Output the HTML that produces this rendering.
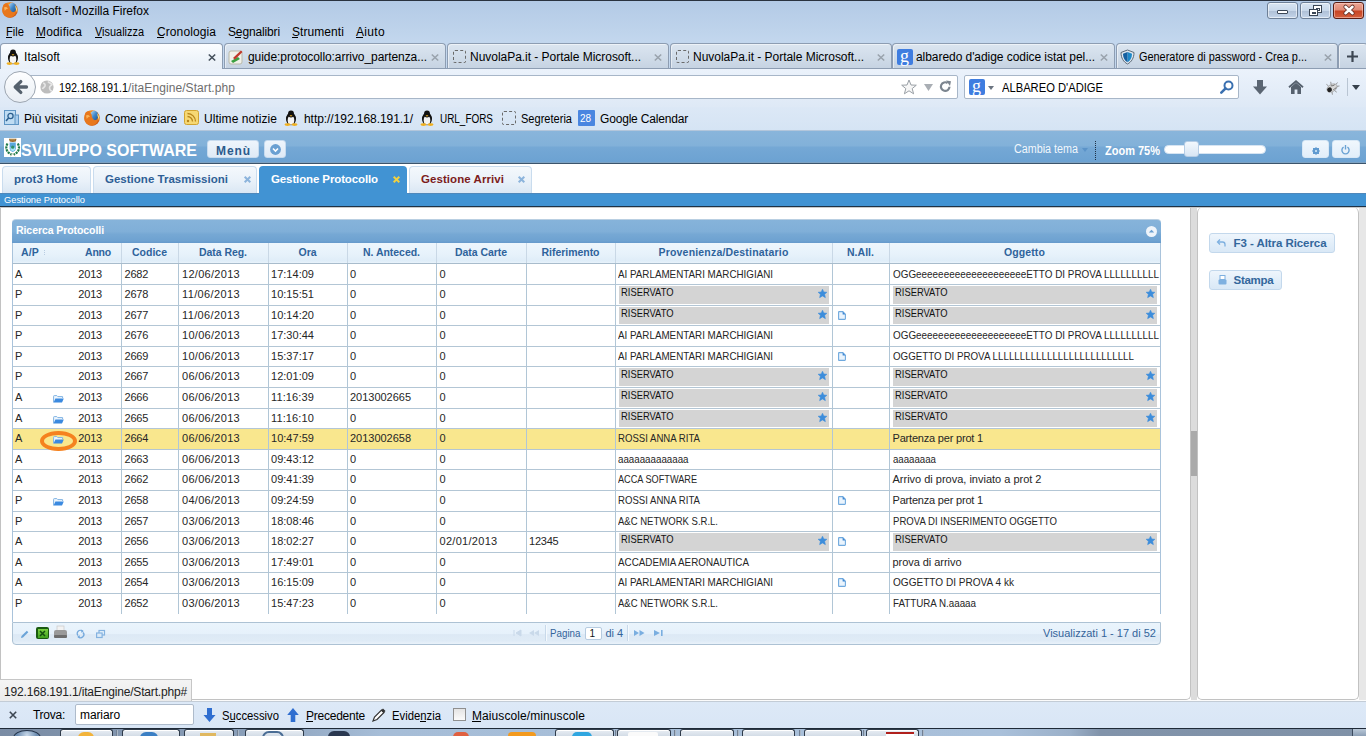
<!DOCTYPE html>
<html><head><meta charset="utf-8"><title>Italsoft</title>
<style>
*{margin:0;padding:0;box-sizing:border-box}
html,body{width:1366px;height:736px;overflow:hidden;background:#fff;font-family:"Liberation Sans",sans-serif;position:relative}
.a{position:absolute}
.t{position:absolute;white-space:pre}
svg{position:absolute;overflow:visible}
.u{text-decoration:underline}
</style></head><body>
<div class="a" style="left:0px;top:0px;width:1366px;height:131px;background:linear-gradient(#b3cae6,#bed3eb 30px,#c3d7ee 43px,#c3d7ee)"></div>
<div class="a" style="left:0px;top:0px;width:1366px;height:1px;background:#2a3340"></div>
<svg style="left:2px;top:2px" width="16" height="16" viewBox="0 0 16 16"><defs><radialGradient id="ffg" cx="45%" cy="40%" r="65%"><stop offset="0" stop-color="#ffcf5a"/><stop offset=".5" stop-color="#f5901f"/><stop offset="1" stop-color="#c24a10"/></radialGradient><linearGradient id="ffb" x1="0" y1="0" x2="1" y2="1"><stop offset="0" stop-color="#bfe0f8"/><stop offset=".5" stop-color="#3f86c8"/><stop offset="1" stop-color="#1d4f8f"/></linearGradient></defs><circle cx="8" cy="8" r="7.8" fill="url(#ffg)"/><ellipse cx="10.2" cy="5.8" rx="4" ry="5" fill="url(#ffb)"/><path d="M1.2 3.2C2.5 1.2 4.5 1 5.6 1.8L7.6 4.6C7.8 7.5 8.6 9.4 10.6 10.2L13.8 9.6C13.2 13 10.8 15.6 8 15.6 4 15.6 .4 12.5 .4 8.2 .4 6.3.7 4.6 1.2 3.2z" fill="#e8771c"/><path d="M2 5.5C3.5 4.5 5 5 6.2 6.5 5 6.8 3.5 7.5 2.8 9z" fill="#f9b45a"/><path d="M13 3.5C15 5 15.8 8 15 10.5 14.2 8 13.5 6 13 3.5z" fill="#ffe27a"/></svg>
<div class="a" style="left:1267px;top:2px;width:31px;height:17px;border:1px solid #6d7f96;border-radius:3px;background:linear-gradient(#d9e5f2 0,#c8d8ea 50%,#aebfd5 51%,#c4d5ea 100%);box-shadow:inset 0 0 0 1px rgba(255,255,255,.55)"></div>
<div class="a" style="left:1277px;top:10px;width:11px;height:4px;background:#fff;border:1px solid #3b4756;border-radius:1px"></div>
<div class="a" style="left:1300px;top:2px;width:31px;height:17px;border:1px solid #6d7f96;border-radius:3px;background:linear-gradient(#d9e5f2 0,#c8d8ea 50%,#aebfd5 51%,#c4d5ea 100%);box-shadow:inset 0 0 0 1px rgba(255,255,255,.55)"></div>
<div class="a" style="left:1313px;top:5px;width:9px;height:8px;background:#fff;border:1.5px solid #3b4756"></div>
<div class="a" style="left:1316px;top:8px;width:4px;height:3px;background:#fff;border:1px solid #3b4756"></div>
<div class="a" style="left:1309px;top:9px;width:9px;height:7px;background:#fff;border:1.5px solid #3b4756"></div>
<div class="a" style="left:1312px;top:12px;width:4px;height:2px;background:#fff;border:1px solid #3b4756"></div>
<div class="a" style="left:1333px;top:2px;width:31px;height:17px;border:1px solid #5a1d14;border-radius:3px;background:linear-gradient(#eba594 0,#e08a76 45%,#c84524 55%,#d4603e 100%);box-shadow:inset 0 0 0 1px rgba(255,220,210,.5)"></div>
<svg style="left:1343px;top:5px" width="12" height="10" viewBox="0 0 12 10"><path d="M2.5 1.8 L9.5 8.2 M9.5 1.8 L2.5 8.2" stroke="#5a2a22" stroke-width="4.2" stroke-linecap="round"/><path d="M2.5 1.8 L9.5 8.2 M9.5 1.8 L2.5 8.2" stroke="#fff" stroke-width="2.6" stroke-linecap="round"/></svg>
<div class="a" style="left:6px;top:37px;width:6px;height:1px;background:#000"></div>
<div class="a" style="left:36px;top:37px;width:9px;height:1px;background:#000"></div>
<div class="a" style="left:95px;top:37px;width:7px;height:1px;background:#000"></div>
<div class="a" style="left:157px;top:37px;width:7px;height:1px;background:#000"></div>
<div class="a" style="left:235px;top:37px;width:6px;height:1px;background:#000"></div>
<div class="a" style="left:292px;top:37px;width:6px;height:1px;background:#000"></div>
<div class="a" style="left:356px;top:37px;width:7px;height:1px;background:#000"></div>
<div class="a" style="left:0px;top:68px;width:1366px;height:1px;background:#8d9db2"></div>
<div class="a" style="left:0px;top:43px;width:223px;height:26px;border:1px solid #8d9db2;border-bottom:none;border-radius:4px 4px 0 0;background:linear-gradient(#fbfdff,#eef4fa 60%,#e9f0f8)"></div>
<div class="a" style="left:224px;top:43px;width:222px;height:25px;border:1px solid #8d9db2;border-bottom:none;border-radius:4px 4px 0 0;background:linear-gradient(#dbe5f0,#cfdbe8 60%,#c6d3e2);box-shadow:inset 1px 1px 0 rgba(255,255,255,.5)"></div>
<div class="a" style="left:447px;top:43px;width:222px;height:25px;border:1px solid #8d9db2;border-bottom:none;border-radius:4px 4px 0 0;background:linear-gradient(#dbe5f0,#cfdbe8 60%,#c6d3e2);box-shadow:inset 1px 1px 0 rgba(255,255,255,.5)"></div>
<div class="a" style="left:670px;top:43px;width:222px;height:25px;border:1px solid #8d9db2;border-bottom:none;border-radius:4px 4px 0 0;background:linear-gradient(#dbe5f0,#cfdbe8 60%,#c6d3e2);box-shadow:inset 1px 1px 0 rgba(255,255,255,.5)"></div>
<div class="a" style="left:892px;top:43px;width:223px;height:25px;border:1px solid #8d9db2;border-bottom:none;border-radius:4px 4px 0 0;background:linear-gradient(#dbe5f0,#cfdbe8 60%,#c6d3e2);box-shadow:inset 1px 1px 0 rgba(255,255,255,.5)"></div>
<div class="a" style="left:1116px;top:43px;width:222px;height:25px;border:1px solid #8d9db2;border-bottom:none;border-radius:4px 4px 0 0;background:linear-gradient(#dbe5f0,#cfdbe8 60%,#c6d3e2);box-shadow:inset 1px 1px 0 rgba(255,255,255,.5)"></div>
<div class="a" style="left:1338px;top:43px;width:30px;height:25px;border:1px solid #8d9db2;border-bottom:none;border-radius:4px 4px 0 0;background:linear-gradient(#dbe5f0,#cfdbe8 60%,#c6d3e2);box-shadow:inset 1px 1px 0 rgba(255,255,255,.5)"></div>
<svg style="left:208px;top:54px" width="8" height="7" viewBox="0 0 8 7"><path d="M.8 .5L7.2 6.5M7.2 .5L.8 6.5" stroke="#45505c" stroke-width="1.6"/></svg>
<svg style="left:431px;top:54px" width="8" height="7" viewBox="0 0 8 7"><path d="M.8 .5L7.2 6.5M7.2 .5L.8 6.5" stroke="#9aa3ad" stroke-width="1.6"/></svg>
<svg style="left:654px;top:54px" width="8" height="7" viewBox="0 0 8 7"><path d="M.8 .5L7.2 6.5M7.2 .5L.8 6.5" stroke="#9aa3ad" stroke-width="1.6"/></svg>
<svg style="left:877px;top:54px" width="8" height="7" viewBox="0 0 8 7"><path d="M.8 .5L7.2 6.5M7.2 .5L.8 6.5" stroke="#9aa3ad" stroke-width="1.6"/></svg>
<svg style="left:1100px;top:54px" width="8" height="7" viewBox="0 0 8 7"><path d="M.8 .5L7.2 6.5M7.2 .5L.8 6.5" stroke="#9aa3ad" stroke-width="1.6"/></svg>
<svg style="left:1324px;top:54px" width="8" height="7" viewBox="0 0 8 7"><path d="M.8 .5L7.2 6.5M7.2 .5L.8 6.5" stroke="#9aa3ad" stroke-width="1.6"/></svg>
<svg style="left:1347px;top:51px" width="11" height="11" viewBox="0 0 11 11"><path d="M5.5 0V11M0 5.5H11" stroke="#3c4652" stroke-width="2.2"/></svg>
<svg style="left:6px;top:49px" width="14" height="16" viewBox="0 0 14 16"><ellipse cx="7" cy="9" rx="5" ry="6.2" fill="#111"/><ellipse cx="7" cy="10.3" rx="3.3" ry="4.5" fill="#f4f4f4"/><ellipse cx="7" cy="4" rx="3" ry="3.4" fill="#111"/><path d="M5.5 5.3h3l-1.5 1.4z" fill="#f0b020"/><ellipse cx="3.5" cy="14.6" rx="3" ry="1.4" fill="#f0b020"/><ellipse cx="10.5" cy="14.6" rx="3" ry="1.4" fill="#f0b020"/></svg>
<svg style="left:228px;top:49px" width="16" height="16" viewBox="0 0 16 16"><rect x="1" y="2" width="13" height="13" rx="2" fill="#f1f1e9" stroke="#b9b9a8"/><path d="M3 12 L10 8 L12 10 L5 14z" fill="#3aa040"/><path d="M5 9 L13 1.5 L14.5 3 L7 10.5z" fill="#c0392b"/></svg>
<div class="a" style="left:453px;top:50px;width:13px;height:13px;border:1px dashed #6a6a6a;border-radius:2px"></div>
<div class="a" style="left:676px;top:50px;width:13px;height:13px;border:1px dashed #6a6a6a;border-radius:2px"></div>
<div class="a" style="left:897px;top:49px;width:16px;height:16px;background:#3f7de0;border-radius:2px"></div>
<span class="t" style="left:900px;top:47px;font-family:'Liberation Serif',serif;font-size:18px;line-height:18px;color:#fff">g</span>
<svg style="left:1120px;top:49px" width="15" height="16" viewBox="0 0 15 16"><path d="M7.5 1 L14 3.5 C14 9 11.5 13 7.5 15 C3.5 13 1 9 1 3.5z" fill="#dfe6ee" stroke="#5d6b78"/><path d="M7.5 3 L12 4.8 C12 9 10.2 11.8 7.5 13.3z" fill="#1e88c8"/><path d="M7.5 3 L3 4.8 C3 9 4.8 11.8 7.5 13.3z" fill="#1560a0"/></svg>
<div class="a" style="left:0px;top:69px;width:1366px;height:38px;background:linear-gradient(#ebf2fb,#dee9f6)"></div>
<div class="a" style="left:20px;top:75px;width:938px;height:24px;background:#fff;border:1px solid #a7b6c8;border-radius:0 2px 2px 0"></div>
<div class="a" style="left:4px;top:71px;width:32px;height:32px;border-radius:50%;border:1px solid #9da6b1;background:linear-gradient(#fdfeff,#e9eef4)"></div>
<svg style="left:11px;top:78px" width="18" height="18" viewBox="0 0 18 18"><path d="M15.5 9H5M9.8 3.6L4.2 9 9.8 14.4" fill="none" stroke="#56616d" stroke-width="3.3" stroke-linecap="round" stroke-linejoin="round"/></svg>
<svg style="left:40px;top:80px" width="14" height="14" viewBox="0 0 14 14"><circle cx="7" cy="7" r="6.6" fill="#bdbdbd"/><path d="M3 3.5C4.5 3 5.5 4.5 5 6 4.5 7.5 3 7.5 2.5 9 M8 1.5C9 3 11 3 12 4.5 11 6 9.5 6 9.5 8 9.8 10 11 11 12 11" fill="none" stroke="#e6e6e6" stroke-width="1.6"/></svg>
<svg style="left:901px;top:79px" width="16" height="16" viewBox="0 0 16 16"><path d="M8 1 L10 6 L15.3 6.2 L11.2 9.6 L12.6 14.8 L8 11.8 L3.4 14.8 L4.8 9.6 L.7 6.2 L6 6z" fill="#f7f7f7" stroke="#9aa0a6" stroke-width="1"/></svg>
<svg style="left:924px;top:84px" width="9" height="7" viewBox="0 0 9 7"><path d="M0 0H9L4.5 7z" fill="#a9aeb4"/></svg>
<svg style="left:939px;top:80px" width="13" height="13" viewBox="0 0 13 13"><path d="M10.5 6.8A4.3 4.3 0 1 1 8.6 3" fill="none" stroke="#7c858f" stroke-width="2.2"/><path d="M7 .5L12 1.2 11 6z" fill="#7c858f"/></svg>
<div class="a" style="left:964px;top:75px;width:275px;height:24px;background:#fff;border:1px solid #a7b6c8;border-radius:2px"></div>
<div class="a" style="left:969px;top:79px;width:16px;height:16px;background:#3f7de0;border-radius:2px"></div>
<span class="t" style="left:972px;top:77px;font-family:'Liberation Serif',serif;font-size:18px;line-height:18px;color:#fff">g</span>
<svg style="left:988px;top:86px" width="6" height="4" viewBox="0 0 6 4"><path d="M0 0H6L3 4z" fill="#6b7480"/></svg>
<svg style="left:1220px;top:80px" width="14" height="14" viewBox="0 0 14 14"><circle cx="8.5" cy="5.5" r="4" fill="none" stroke="#3a70b0" stroke-width="2"/><path d="M5.6 8.4L1.3 12.7" stroke="#3a70b0" stroke-width="2.6" stroke-linecap="round"/></svg>
<svg style="left:1253px;top:80px" width="14" height="15" viewBox="0 0 14 15"><path d="M4 0H10V6.5H14L7 14.5 0 6.5H4z" fill="#5a6572"/></svg>
<svg style="left:1288px;top:80px" width="16" height="15" viewBox="0 0 16 15"><path d="M1 7.2L8 1.2 15 7.2" fill="none" stroke="#56616e" stroke-width="1.8"/><path d="M3 7V14H6.6V9.6H9.4V14H13V7L8 2.8z" fill="#56616e"/></svg>
<svg style="left:1324px;top:80px" width="16" height="15" viewBox="0 0 16 15"><g transform="rotate(-30 8 8)"><ellipse cx="8" cy="8" rx="5.5" ry="3.6" fill="#d9d9d9" stroke="#9a9a9a" stroke-width=".6"/><ellipse cx="5" cy="8.3" rx="2.4" ry="2.4" fill="#222"/><path d="M8 5.5Q10 7 12 6.5M8 10.5Q10 9.5 12 10" stroke="#555" stroke-width=".7" fill="none"/><path d="M6 4.5L5 2M9 4.5L10 2M6 11.5L5 14M9 11.5L10 14M13 7L15.5 6M13 9L15.5 10" stroke="#8a8a8a" stroke-width=".8"/></g></svg>
<div class="a" style="left:1347px;top:78px;width:1px;height:18px;background:#b9c5d3"></div>
<svg style="left:1352px;top:85px" width="8" height="5" viewBox="0 0 8 5"><path d="M0 0H8L4 5z" fill="#36404b"/></svg>
<div class="a" style="left:0px;top:107px;width:1366px;height:24px;background:linear-gradient(#dce8f6,#d5e4f4)"></div>
<div class="a" style="left:0px;top:130px;width:1366px;height:1px;background:#b3c6db"></div>
<svg style="left:4px;top:110px" width="15" height="15" viewBox="0 0 15 15"><rect x=".5" y=".5" width="11" height="14" fill="#bfdcf3" stroke="#5f95c4"/><rect x="11" y="5" width="3.5" height="9.5" fill="#a8cdee" stroke="#5f95c4"/><circle cx="6.5" cy="6" r="2.6" fill="none" stroke="#2b5f90" stroke-width="1.3"/><path d="M4.6 8L2 11" stroke="#2b5f90" stroke-width="1.6"/></svg>
<svg style="left:84px;top:110px" width="16" height="16" viewBox="0 0 16 16"><circle cx="8" cy="8" r="7.8" fill="url(#ffg)"/><ellipse cx="10.2" cy="5.8" rx="4" ry="5" fill="url(#ffb)"/><path d="M1.2 3.2C2.5 1.2 4.5 1 5.6 1.8L7.6 4.6C7.8 7.5 8.6 9.4 10.6 10.2L13.8 9.6C13.2 13 10.8 15.6 8 15.6 4 15.6 .4 12.5 .4 8.2 .4 6.3.7 4.6 1.2 3.2z" fill="#e8771c"/><path d="M2 5.5C3.5 4.5 5 5 6.2 6.5 5 6.8 3.5 7.5 2.8 9z" fill="#f9b45a"/><path d="M13 3.5C15 5 15.8 8 15 10.5 14.2 8 13.5 6 13 3.5z" fill="#ffe27a"/></svg>
<svg style="left:184px;top:110px" width="15" height="15" viewBox="0 0 15 15"><rect x=".5" y=".5" width="14" height="14" rx="2" fill="#f6d873" stroke="#d1a431"/><path d="M3.5 6.5A5 5 0 0 1 8.5 11.5M3.5 3.5A8 8 0 0 1 11.5 11.5" fill="none" stroke="#b7851b" stroke-width="1.3"/><circle cx="4" cy="11" r="1.2" fill="#b7851b"/></svg>
<svg style="left:284px;top:110px" width="14" height="16" viewBox="0 0 14 16"><ellipse cx="7" cy="9" rx="5" ry="6.2" fill="#111"/><ellipse cx="7" cy="10.3" rx="3.3" ry="4.5" fill="#f4f4f4"/><ellipse cx="7" cy="4" rx="3" ry="3.4" fill="#111"/><path d="M5.5 5.3h3l-1.5 1.4z" fill="#f0b020"/><ellipse cx="3.5" cy="14.6" rx="3" ry="1.4" fill="#f0b020"/><ellipse cx="10.5" cy="14.6" rx="3" ry="1.4" fill="#f0b020"/></svg>
<svg style="left:420px;top:110px" width="14" height="16" viewBox="0 0 14 16"><ellipse cx="7" cy="9" rx="5" ry="6.2" fill="#111"/><ellipse cx="7" cy="10.3" rx="3.3" ry="4.5" fill="#f4f4f4"/><ellipse cx="7" cy="4" rx="3" ry="3.4" fill="#111"/><path d="M5.5 5.3h3l-1.5 1.4z" fill="#f0b020"/><ellipse cx="3.5" cy="14.6" rx="3" ry="1.4" fill="#f0b020"/><ellipse cx="10.5" cy="14.6" rx="3" ry="1.4" fill="#f0b020"/></svg>
<div class="a" style="left:502px;top:111px;width:14px;height:14px;border:1px dashed #6a6a6a;border-radius:2px"></div>
<div class="a" style="left:578px;top:110px;width:17px;height:16px;background:#4a86e0;border-radius:1px"></div>
<span class="t" style="left:580px;top:114px;font-size:10px;line-height:10px;color:#fff">28</span>
<div class="a" style="left:0px;top:131px;width:1366px;height:32px;background:linear-gradient(#89b5db 0,#82b1d9 15px,#75a8d5 16px,#6ca2d2 31px)"></div>
<div class="a" style="left:0px;top:162px;width:1366px;height:1px;background:#7da2c3"></div>
<div class="a" style="left:0px;top:163px;width:1366px;height:1px;background:#3b546c"></div>
<div class="a" style="left:4px;top:138px;width:17px;height:19px;background:#fff"></div>
<svg style="left:4px;top:138px" width="17" height="19" viewBox="0 0 17 19"><path d="M5 .8H12.5L11.8 3.6Q8.7 4.3 5.7 3.6z" fill="#94682a"/><path d="M6.2 1.8H11.3" stroke="#d9b070" stroke-width=".7"/><path d="M5.6 4.6H11.8V10.8Q11.8 13 8.7 14 5.6 13 5.6 10.8z" fill="#5aa8dc"/><path d="M6.5 9H11V11.5Q10 13 8.7 13.3 7.4 13 6.5 11.5z" fill="#a6e4f4"/><circle cx="8.7" cy="9.2" r="1.6" fill="#2f8f6a"/><path d="M3.5 5.5Q1.4 9 3 12.5 4.6 15.5 7.6 16.4" fill="none" stroke="#1f7a4a" stroke-width="2.2" stroke-dasharray="2.2 .8"/><path d="M13.8 5.5Q15.9 9 14.3 12.5 12.7 15.5 9.7 16.4" fill="none" stroke="#1f7a4a" stroke-width="2.2" stroke-dasharray="2.2 .8"/><path d="M6.2 18L8.7 15.8 11.2 18" fill="none" stroke="#9ab090" stroke-width=".9"/></svg>
<div class="a" style="left:207px;top:140px;width:52px;height:18px;border-radius:3px;background:linear-gradient(#eef5fc,#dfeaf6);border:1px solid #c7dbef"></div>
<div class="a" style="left:264px;top:140px;width:22px;height:18px;border-radius:3px;background:linear-gradient(#eef5fc,#dfeaf6);border:1px solid #c7dbef"></div>
<svg style="left:270px;top:143.5px" width="11" height="11" viewBox="0 0 11 11"><circle cx="5.5" cy="5.5" r="5.4" fill="#6aa0d2"/><path d="M3 4.5L5.5 7 8 4.5" fill="none" stroke="#fff" stroke-width="1.6"/></svg>
<svg style="left:1082px;top:148px" width="6" height="4" viewBox="0 0 6 4"><path d="M0 0H6L3 4z" fill="#5b93c8"/></svg>
<div class="a" style="left:1095px;top:141px;width:1px;height:19px;background:repeating-linear-gradient(#1f3044 0 1px,transparent 1px 2px)"></div>
<div class="a" style="left:1164px;top:145px;width:102px;height:9px;border-radius:4.5px;background:#fff;border:1px solid #d6e4f2"></div>
<div class="a" style="left:1184px;top:141px;width:15px;height:16px;border-radius:3px;background:linear-gradient(#f3f8fd,#d8e6f4);border:1px solid #b6cde5"></div>
<div class="a" style="left:1302px;top:140px;width:27px;height:18px;border-radius:3px;background:linear-gradient(#f0f7fd,#e2eef9);border:1px solid #d8e8f6"></div>
<svg style="left:1312px;top:147px" width="8" height="8" viewBox="0 0 8 8"><path d="M1 1H3L4 0 5 1H7V3L8 4 7 5V7H5L4 8 3 7H1V5L0 4 1 3z" fill="#5f9ad0"/><circle cx="4" cy="4" r="1" fill="#d8ecfa"/></svg>
<div class="a" style="left:1332px;top:140px;width:28px;height:18px;border-radius:3px;background:linear-gradient(#f0f7fd,#e2eef9);border:1px solid #d8e8f6"></div>
<svg style="left:1341px;top:145px" width="9" height="9" viewBox="0 0 9 9"><path d="M2.6 2.2A3.6 3.6 0 1 0 6.4 2.2" fill="none" stroke="#6aa2d4" stroke-width="1.4"/><path d="M4.5 0V4.5" stroke="#6aa2d4" stroke-width="1.4"/></svg>
<div class="a" style="left:0px;top:164px;width:1366px;height:29px;background:#fff"></div>
<div class="a" style="left:2px;top:166px;width:89px;height:27px;border:1px solid #c9dcee;border-bottom:none;border-radius:4px 4px 0 0;background:linear-gradient(#f4f8fc 0,#e9f1f9 55%,#dae7f4 100%)"></div>
<div class="a" style="left:93px;top:166px;width:164px;height:27px;border:1px solid #c9dcee;border-bottom:none;border-radius:4px 4px 0 0;background:linear-gradient(#f4f8fc 0,#e9f1f9 55%,#dae7f4 100%)"></div>
<svg style="left:244px;top:176px" width="7" height="7" viewBox="0 0 7 7"><path d="M.7.7L6.3 6.3M6.3.7L.7 6.3" stroke="#8cb4dc" stroke-width="2"/></svg>
<div class="a" style="left:409px;top:166px;width:123px;height:27px;border:1px solid #c9dcee;border-bottom:none;border-radius:4px 4px 0 0;background:linear-gradient(#f4f8fc 0,#e9f1f9 55%,#dae7f4 100%)"></div>
<svg style="left:518px;top:176px" width="7" height="7" viewBox="0 0 7 7"><path d="M.7.7L6.3 6.3M6.3.7L.7 6.3" stroke="#8cb4dc" stroke-width="2"/></svg>
<div class="a" style="left:259px;top:166px;width:148px;height:28px;border-radius:4px 4px 0 0;background:#4193d3"></div>
<svg style="left:393px;top:176px" width="7" height="7" viewBox="0 0 7 7"><path d="M.7.7L6.3 6.3M6.3.7L.7 6.3" stroke="#f0d040" stroke-width="2"/></svg>
<div class="a" style="left:0px;top:193px;width:1366px;height:13px;background:#4193d3"></div>
<div class="a" style="left:0px;top:193px;width:259px;height:1px;background:#4f88bb"></div>
<div class="a" style="left:407px;top:193px;width:959px;height:1px;background:#4f88bb"></div>
<div class="a" style="left:0px;top:206px;width:1366px;height:1px;background:#1e3246"></div>
<div class="a" style="left:0px;top:207px;width:1366px;height:493px;background:#fff"></div>
<div class="a" style="left:0px;top:207px;width:1191px;height:493px;border:1px solid #c2c2c2;border-top:none;border-radius:0 0 5px 5px"></div>
<div class="a" style="left:1191px;top:207px;width:6px;height:493px;background:#dcdcdc"></div>
<div class="a" style="left:1191px;top:431px;width:6px;height:45px;background:#aaaaaa"></div>
<div class="a" style="left:1197px;top:207px;width:162px;height:493px;border:1px solid #c2c2c2;border-top:none;border-radius:6px 6px 5px 5px;background:#fff"></div>
<div class="a" style="left:1359px;top:207px;width:7px;height:493px;background:#e7e7e7"></div>
<div class="a" style="left:0px;top:207px;width:1366px;height:1px;background:#c9c9c9"></div>
<div class="a" style="left:12px;top:219px;width:1149px;height:24px;border-radius:4px 4px 0 0;border-top:1px solid #b9cfe2;background:linear-gradient(#86b3da 0,#80afd8 50%,#76a8d4 62%,#6ea2d1 90%,#6699cb 100%)"></div>
<svg style="left:1146px;top:226px" width="11" height="11" viewBox="0 0 11 11"><circle cx="5.5" cy="5.5" r="5.5" fill="#eef4fa"/><path d="M2.8 6.6L5.5 3.8 8.2 6.6z" fill="#6a9fd0"/></svg>
<div class="a" style="left:12px;top:243px;width:1149px;height:21px;background:linear-gradient(#edf6fd 0,#e7f2fb 55%,#dfedf8 90%,#e9f3fb 100%);border-left:1px solid #a9c3db;border-right:1px solid #a9c3db;border-bottom:1px solid #a8bccc"></div>
<div class="a" style="left:12px;top:264px;width:1149px;height:358px;background:#fff;border-left:1px solid #a9c3db;border-right:1px solid #a9c3db"></div>
<div class="a" style="left:44px;top:250px;width:1px;height:6px;background:repeating-linear-gradient(#b9cde2 0 1px,transparent 1px 2px)"></div>
<div class="a" style="left:121px;top:243px;width:1px;height:20px;background:#c9d8e6"></div>
<div class="a" style="left:178px;top:243px;width:1px;height:20px;background:#c9d8e6"></div>
<div class="a" style="left:268px;top:243px;width:1px;height:20px;background:#c9d8e6"></div>
<div class="a" style="left:347px;top:243px;width:1px;height:20px;background:#c9d8e6"></div>
<div class="a" style="left:436px;top:243px;width:1px;height:20px;background:#c9d8e6"></div>
<div class="a" style="left:526px;top:243px;width:1px;height:20px;background:#c9d8e6"></div>
<div class="a" style="left:615px;top:243px;width:1px;height:20px;background:#c9d8e6"></div>
<div class="a" style="left:832px;top:243px;width:1px;height:20px;background:#c9d8e6"></div>
<div class="a" style="left:889px;top:243px;width:1px;height:20px;background:#c9d8e6"></div>
<div class="a" style="left:13px;top:429px;width:1147px;height:20px;background:#f9e78e"></div>
<div class="a" style="left:13px;top:284px;width:1147px;height:1px;background:#b3c6d5"></div>
<div class="a" style="left:13px;top:305px;width:1147px;height:1px;background:#b3c6d5"></div>
<div class="a" style="left:13px;top:325px;width:1147px;height:1px;background:#b3c6d5"></div>
<div class="a" style="left:13px;top:346px;width:1147px;height:1px;background:#b3c6d5"></div>
<div class="a" style="left:13px;top:366px;width:1147px;height:1px;background:#b3c6d5"></div>
<div class="a" style="left:13px;top:387px;width:1147px;height:1px;background:#b3c6d5"></div>
<div class="a" style="left:13px;top:408px;width:1147px;height:1px;background:#b3c6d5"></div>
<div class="a" style="left:13px;top:428px;width:1147px;height:1px;background:#b3c6d5"></div>
<div class="a" style="left:13px;top:449px;width:1147px;height:1px;background:#b3c6d5"></div>
<div class="a" style="left:13px;top:469px;width:1147px;height:1px;background:#b3c6d5"></div>
<div class="a" style="left:13px;top:490px;width:1147px;height:1px;background:#b3c6d5"></div>
<div class="a" style="left:13px;top:511px;width:1147px;height:1px;background:#b3c6d5"></div>
<div class="a" style="left:13px;top:531px;width:1147px;height:1px;background:#b3c6d5"></div>
<div class="a" style="left:13px;top:552px;width:1147px;height:1px;background:#b3c6d5"></div>
<div class="a" style="left:13px;top:572px;width:1147px;height:1px;background:#b3c6d5"></div>
<div class="a" style="left:13px;top:593px;width:1147px;height:1px;background:#b3c6d5"></div>
<div class="a" style="left:121px;top:264px;width:1px;height:350px;background:#b1c6d6"></div>
<div class="a" style="left:178px;top:264px;width:1px;height:350px;background:#b1c6d6"></div>
<div class="a" style="left:268px;top:264px;width:1px;height:350px;background:#b1c6d6"></div>
<div class="a" style="left:347px;top:264px;width:1px;height:350px;background:#b1c6d6"></div>
<div class="a" style="left:436px;top:264px;width:1px;height:350px;background:#b1c6d6"></div>
<div class="a" style="left:526px;top:264px;width:1px;height:350px;background:#b1c6d6"></div>
<div class="a" style="left:615px;top:264px;width:1px;height:350px;background:#b1c6d6"></div>
<div class="a" style="left:832px;top:264px;width:1px;height:350px;background:#b1c6d6"></div>
<div class="a" style="left:889px;top:264px;width:1px;height:350px;background:#b1c6d6"></div>
<div class="a" style="left:619px;top:286px;width:210px;height:18px;background:#d4d4d4"></div>
<svg style="left:818px;top:289px" width="9" height="9" viewBox="0 0 10 10"><path d="M5 .2L6.5 3.3 9.9 3.6 7.4 5.8 8.2 9.6 5 7.7 1.8 9.6 2.6 5.8.1 3.6 3.5 3.3z" fill="#3d8ddb" stroke="#3d8ddb" stroke-width=".6" stroke-linejoin="round"/></svg>
<div class="a" style="left:893px;top:286px;width:264px;height:18px;background:#d4d4d4"></div>
<svg style="left:1146px;top:289px" width="9" height="9" viewBox="0 0 10 10"><path d="M5 .2L6.5 3.3 9.9 3.6 7.4 5.8 8.2 9.6 5 7.7 1.8 9.6 2.6 5.8.1 3.6 3.5 3.3z" fill="#3d8ddb" stroke="#3d8ddb" stroke-width=".6" stroke-linejoin="round"/></svg>
<div class="a" style="left:619px;top:307px;width:210px;height:17px;background:#d4d4d4"></div>
<svg style="left:818px;top:310px" width="9" height="9" viewBox="0 0 10 10"><path d="M5 .2L6.5 3.3 9.9 3.6 7.4 5.8 8.2 9.6 5 7.7 1.8 9.6 2.6 5.8.1 3.6 3.5 3.3z" fill="#3d8ddb" stroke="#3d8ddb" stroke-width=".6" stroke-linejoin="round"/></svg>
<svg style="left:838px;top:311px" width="8" height="9" viewBox="0 0 8 9"><path d="M1.2.6H4.8L7.4 3.2V7.8Q7.4 8.4 6.8 8.4H1.2Q.6 8.4.6 7.8V1.2Q.6.6 1.2.6z" fill="#eaf4fd" stroke="#6fa9de" stroke-width="1.1"/><path d="M4.6.6V3.4H7.4z" fill="#3f88d4"/></svg>
<div class="a" style="left:893px;top:307px;width:264px;height:17px;background:#d4d4d4"></div>
<svg style="left:1146px;top:310px" width="9" height="9" viewBox="0 0 10 10"><path d="M5 .2L6.5 3.3 9.9 3.6 7.4 5.8 8.2 9.6 5 7.7 1.8 9.6 2.6 5.8.1 3.6 3.5 3.3z" fill="#3d8ddb" stroke="#3d8ddb" stroke-width=".6" stroke-linejoin="round"/></svg>
<svg style="left:838px;top:352px" width="8" height="9" viewBox="0 0 8 9"><path d="M1.2.6H4.8L7.4 3.2V7.8Q7.4 8.4 6.8 8.4H1.2Q.6 8.4.6 7.8V1.2Q.6.6 1.2.6z" fill="#eaf4fd" stroke="#6fa9de" stroke-width="1.1"/><path d="M4.6.6V3.4H7.4z" fill="#3f88d4"/></svg>
<div class="a" style="left:619px;top:368px;width:210px;height:18px;background:#d4d4d4"></div>
<svg style="left:818px;top:371px" width="9" height="9" viewBox="0 0 10 10"><path d="M5 .2L6.5 3.3 9.9 3.6 7.4 5.8 8.2 9.6 5 7.7 1.8 9.6 2.6 5.8.1 3.6 3.5 3.3z" fill="#3d8ddb" stroke="#3d8ddb" stroke-width=".6" stroke-linejoin="round"/></svg>
<div class="a" style="left:893px;top:368px;width:264px;height:18px;background:#d4d4d4"></div>
<svg style="left:1146px;top:371px" width="9" height="9" viewBox="0 0 10 10"><path d="M5 .2L6.5 3.3 9.9 3.6 7.4 5.8 8.2 9.6 5 7.7 1.8 9.6 2.6 5.8.1 3.6 3.5 3.3z" fill="#3d8ddb" stroke="#3d8ddb" stroke-width=".6" stroke-linejoin="round"/></svg>
<svg style="left:53px;top:395px" width="11" height="8" viewBox="0 0 11 8"><path d="M.6 7.4V1.3Q.6.6 1.3.6H3.8L4.8 1.6H9.6V3" fill="#eef6fd" stroke="#7fb3e3" stroke-width="1"/><path d="M2.4 3.4H10.8L9 7.6H.6z" fill="#3b8ae0"/></svg>
<div class="a" style="left:619px;top:389px;width:210px;height:18px;background:#d4d4d4"></div>
<svg style="left:818px;top:392px" width="9" height="9" viewBox="0 0 10 10"><path d="M5 .2L6.5 3.3 9.9 3.6 7.4 5.8 8.2 9.6 5 7.7 1.8 9.6 2.6 5.8.1 3.6 3.5 3.3z" fill="#3d8ddb" stroke="#3d8ddb" stroke-width=".6" stroke-linejoin="round"/></svg>
<div class="a" style="left:893px;top:389px;width:264px;height:18px;background:#d4d4d4"></div>
<svg style="left:1146px;top:392px" width="9" height="9" viewBox="0 0 10 10"><path d="M5 .2L6.5 3.3 9.9 3.6 7.4 5.8 8.2 9.6 5 7.7 1.8 9.6 2.6 5.8.1 3.6 3.5 3.3z" fill="#3d8ddb" stroke="#3d8ddb" stroke-width=".6" stroke-linejoin="round"/></svg>
<svg style="left:53px;top:416px" width="11" height="8" viewBox="0 0 11 8"><path d="M.6 7.4V1.3Q.6.6 1.3.6H3.8L4.8 1.6H9.6V3" fill="#eef6fd" stroke="#7fb3e3" stroke-width="1"/><path d="M2.4 3.4H10.8L9 7.6H.6z" fill="#3b8ae0"/></svg>
<div class="a" style="left:619px;top:410px;width:210px;height:17px;background:#d4d4d4"></div>
<svg style="left:818px;top:413px" width="9" height="9" viewBox="0 0 10 10"><path d="M5 .2L6.5 3.3 9.9 3.6 7.4 5.8 8.2 9.6 5 7.7 1.8 9.6 2.6 5.8.1 3.6 3.5 3.3z" fill="#3d8ddb" stroke="#3d8ddb" stroke-width=".6" stroke-linejoin="round"/></svg>
<div class="a" style="left:893px;top:410px;width:264px;height:17px;background:#d4d4d4"></div>
<svg style="left:1146px;top:413px" width="9" height="9" viewBox="0 0 10 10"><path d="M5 .2L6.5 3.3 9.9 3.6 7.4 5.8 8.2 9.6 5 7.7 1.8 9.6 2.6 5.8.1 3.6 3.5 3.3z" fill="#3d8ddb" stroke="#3d8ddb" stroke-width=".6" stroke-linejoin="round"/></svg>
<svg style="left:53px;top:436px" width="11" height="8" viewBox="0 0 11 8"><path d="M.6 7.4V1.3Q.6.6 1.3.6H3.8L4.8 1.6H9.6V3" fill="#eef6fd" stroke="#7fb3e3" stroke-width="1"/><path d="M2.4 3.4H10.8L9 7.6H.6z" fill="#3b8ae0"/></svg>
<svg style="left:53px;top:498px" width="11" height="8" viewBox="0 0 11 8"><path d="M.6 7.4V1.3Q.6.6 1.3.6H3.8L4.8 1.6H9.6V3" fill="#eef6fd" stroke="#7fb3e3" stroke-width="1"/><path d="M2.4 3.4H10.8L9 7.6H.6z" fill="#3b8ae0"/></svg>
<svg style="left:838px;top:496px" width="8" height="9" viewBox="0 0 8 9"><path d="M1.2.6H4.8L7.4 3.2V7.8Q7.4 8.4 6.8 8.4H1.2Q.6 8.4.6 7.8V1.2Q.6.6 1.2.6z" fill="#eaf4fd" stroke="#6fa9de" stroke-width="1.1"/><path d="M4.6.6V3.4H7.4z" fill="#3f88d4"/></svg>
<div class="a" style="left:619px;top:533px;width:210px;height:18px;background:#d4d4d4"></div>
<svg style="left:818px;top:536px" width="9" height="9" viewBox="0 0 10 10"><path d="M5 .2L6.5 3.3 9.9 3.6 7.4 5.8 8.2 9.6 5 7.7 1.8 9.6 2.6 5.8.1 3.6 3.5 3.3z" fill="#3d8ddb" stroke="#3d8ddb" stroke-width=".6" stroke-linejoin="round"/></svg>
<svg style="left:838px;top:537px" width="8" height="9" viewBox="0 0 8 9"><path d="M1.2.6H4.8L7.4 3.2V7.8Q7.4 8.4 6.8 8.4H1.2Q.6 8.4.6 7.8V1.2Q.6.6 1.2.6z" fill="#eaf4fd" stroke="#6fa9de" stroke-width="1.1"/><path d="M4.6.6V3.4H7.4z" fill="#3f88d4"/></svg>
<div class="a" style="left:893px;top:533px;width:264px;height:18px;background:#d4d4d4"></div>
<svg style="left:1146px;top:536px" width="9" height="9" viewBox="0 0 10 10"><path d="M5 .2L6.5 3.3 9.9 3.6 7.4 5.8 8.2 9.6 5 7.7 1.8 9.6 2.6 5.8.1 3.6 3.5 3.3z" fill="#3d8ddb" stroke="#3d8ddb" stroke-width=".6" stroke-linejoin="round"/></svg>
<svg style="left:838px;top:578px" width="8" height="9" viewBox="0 0 8 9"><path d="M1.2.6H4.8L7.4 3.2V7.8Q7.4 8.4 6.8 8.4H1.2Q.6 8.4.6 7.8V1.2Q.6.6 1.2.6z" fill="#eaf4fd" stroke="#6fa9de" stroke-width="1.1"/><path d="M4.6.6V3.4H7.4z" fill="#3f88d4"/></svg>
<div class="a" style="left:40px;top:431px;width:36.5px;height:20px;border:4.6px solid #f5821f;border-radius:50%"></div>
<div class="a" style="left:12px;top:614px;width:1149px;height:8px;background:#fff;border-left:1px solid #a9c3db"></div>
<div class="a" style="left:12px;top:622px;width:1149px;height:23px;border:1px solid #adc2d4;border-radius:0 0 4px 4px;background:linear-gradient(#eaf4fc 0,#e6f1fb 50%,#dde9f5 55%,#dfebf6 85%,#eaf2fa 100%)"></div>
<svg style="left:20px;top:630px" width="9" height="9" viewBox="0 0 9 9"><path d="M1 8L1.5 6 6.8 .7 8.3 2.2 3 7.5z" fill="#6aa3d8"/></svg>
<div class="a" style="left:36px;top:627px;width:13px;height:12px;background:#1a5a10;border-radius:2px"></div>
<div class="a" style="left:37.5px;top:628.5px;width:10px;height:9px;background:linear-gradient(#7ad040,#3fa020)"></div>
<svg style="left:39px;top:629.5px" width="7" height="7" viewBox="0 0 7 7"><path d="M1 1L6 6M6 1L1 6" stroke="#145010" stroke-width="1.5"/></svg>
<svg style="left:53px;top:626px" width="15" height="13" viewBox="0 0 15 13"><rect x="4" y="0" width="7" height="5" fill="#f2f2f2" stroke="#c8c8c8" stroke-width=".7"/><path d="M1 6Q1 4 3 4H12Q14 4 14 6V10H1z" fill="#9a9a9a"/><rect x="1" y="9" width="13" height="3" rx="1" fill="#6d6d6d"/></svg>
<svg style="left:76px;top:629px" width="9" height="10" viewBox="0 0 9 10"><path d="M2 6.5A3 3 0 0 1 6.5 2.3M7 3.5A3 3 0 0 1 2.5 7.7" fill="none" stroke="#75a9dc" stroke-width="1.3"/><path d="M5.2 .5L7.8 2 5.5 4z M3.8 9.5L1.2 8 3.5 6z" fill="#75a9dc"/></svg>
<svg style="left:96px;top:630px" width="9" height="8" viewBox="0 0 9 8"><rect x="3" y=".5" width="5.5" height="4.5" fill="none" stroke="#84b2e0" stroke-width="1.2"/><rect x=".6" y="3" width="5.5" height="4.5" fill="#dceaf7" stroke="#84b2e0" stroke-width="1.2"/></svg>
<svg style="left:513px;top:630px" width="9" height="6" viewBox="0 0 9 6"><path d="M1 0V6M8 0V6L3 3z" fill="#c9d9ea" stroke="#c9d9ea" stroke-width="1"/></svg>
<svg style="left:529px;top:630px" width="10" height="6" viewBox="0 0 10 6"><path d="M5 0V6L0 3zM10 0V6L5 3z" fill="#c9d9ea"/></svg>
<div class="a" style="left:545px;top:625px;width:1px;height:16px;background:#c8d9ea;box-shadow:1px 0 0 #f4f9fd"></div>
<div class="a" style="left:585px;top:627px;width:17px;height:13px;background:#fff;border:1px solid #b6cbe0;border-radius:2px"></div>
<div class="a" style="left:627px;top:625px;width:1px;height:16px;background:#c8d9ea;box-shadow:1px 0 0 #f4f9fd"></div>
<svg style="left:634px;top:630px" width="11" height="6" viewBox="0 0 11 6"><path d="M0 0V6L5 3zM5.5 0V6L10.5 3z" fill="#7aaee0"/></svg>
<svg style="left:654px;top:630px" width="9" height="6" viewBox="0 0 9 6"><path d="M0 0V6L6 3z" fill="#7aaee0"/><rect x="7" y="0" width="1.6" height="6" fill="#7aaee0"/></svg>
<div class="a" style="left:1209px;top:233px;width:126px;height:20px;border:1px solid #c3d8ec;border-radius:3px;background:linear-gradient(#eef5fc,#e2eef9 55%,#d9e8f6)"></div>
<svg style="left:1217px;top:239px" width="9" height="8" viewBox="0 0 9 8"><path d="M3 .5L.5 3 3 5.5" fill="none" stroke="#7eb0e0" stroke-width="1.3"/><path d="M1 3H5.5A2.5 2.5 0 0 1 8 5.5V7.5" fill="none" stroke="#7eb0e0" stroke-width="1.3"/></svg>
<div class="a" style="left:1209px;top:270px;width:73px;height:20px;border:1px solid #c3d8ec;border-radius:3px;background:linear-gradient(#eef5fc,#e2eef9 55%,#d9e8f6)"></div>
<svg style="left:1218px;top:275px" width="9" height="10" viewBox="0 0 9 10"><rect x="2" y=".5" width="5" height="4" fill="#fff" stroke="#7eb0e0" stroke-width="1"/><rect x=".5" y="4.5" width="8" height="5" rx="1" fill="#7eb0e0"/></svg>
<div class="a" style="left:0px;top:679px;width:192px;height:22px;background:linear-gradient(#f4f4f4,#ebebeb);border:1px solid #c6c6c6;border-left:none;border-bottom:none"></div>
<div class="a" style="left:192px;top:700px;width:1174px;height:1px;background:#fbfbfb"></div>
<div class="a" style="left:0px;top:701px;width:1366px;height:27px;background:linear-gradient(#dde9f7,#d9e6f6)"></div>
<div class="a" style="left:0px;top:701px;width:1366px;height:1px;background:#c3ccd6"></div>
<svg style="left:9px;top:711px" width="8" height="8" viewBox="0 0 8 8"><path d="M.8.8L7.2 7.2M7.2.8L.8 7.2" stroke="#3c4652" stroke-width="1.6"/></svg>
<div class="a" style="left:75px;top:704px;width:119px;height:21px;background:#fff;border:1px solid #aebbcb;border-radius:2px"></div>
<svg style="left:203px;top:708px" width="13" height="14" viewBox="0 0 13 14"><path d="M4 0H9V7H12.5L6.5 14 .5 7H4z" fill="#2f6ed0"/></svg>
<div class="a" style="left:229px;top:721px;width:6px;height:1px;background:#000"></div>
<svg style="left:287px;top:708px" width="12" height="14" viewBox="0 0 12 14"><path d="M3.7 14H8.3V7H11.8L6 0 .2 7H3.7z" fill="#2f6ed0"/></svg>
<div class="a" style="left:306px;top:721px;width:7px;height:1px;background:#000"></div>
<svg style="left:372px;top:708px" width="14" height="14" viewBox="0 0 14 14"><path d="M1 13L2.5 9 9.5 2 12 4.5 5 11.5z" fill="#fff" stroke="#333" stroke-width="1.2"/><path d="M9 2.5L11 .5 13.5 3 11.5 5" fill="#333"/></svg>
<div class="a" style="left:420px;top:721px;width:6px;height:1px;background:#000"></div>
<div class="a" style="left:453px;top:708px;width:13px;height:13px;background:linear-gradient(#e4e4e4,#fbfbfb);border:1px solid #8f8f8f"></div>
<div class="a" style="left:472px;top:721px;width:9px;height:1px;background:#000"></div>
<div class="a" style="left:0px;top:728px;width:1366px;height:8px;background:linear-gradient(90deg,#7a8ca4 0,#8a9fb9 250px,#a6bdd7 380px,#a9c0da 1000px,#9bb0c9 1070px,#8193aa 1100px,#7f91a7 1366px)"></div>
<div class="a" style="left:0px;top:728px;width:1366px;height:1px;background:#1f2a38"></div>
<div class="a" style="left:13px;top:730px;width:28px;height:16px;border:1px solid #24344a;border-radius:50%;background:radial-gradient(circle at 50% 30%,#c9d9ea,#6c8cb0 60%)"></div>
<div class="a" style="left:60px;top:729px;width:53px;height:8px;border:1px solid #2f3b4a;border-bottom:none;border-radius:3px 3px 0 0;background:linear-gradient(#e9eef4,#cfd9e4);box-shadow:inset 0 1px 0 #fff"></div>
<div class="a" style="left:122px;top:729px;width:58px;height:8px;border:1px solid #2f3b4a;border-bottom:none;border-radius:3px 3px 0 0;background:linear-gradient(#e9eef4,#cfd9e4);box-shadow:inset 0 1px 0 #fff"></div>
<div class="a" style="left:184px;top:729px;width:50px;height:8px;border:1px solid #2f3b4a;border-bottom:none;border-radius:3px 3px 0 0;background:linear-gradient(#e9eef4,#cfd9e4);box-shadow:inset 0 1px 0 #fff"></div>
<div class="a" style="left:245px;top:729px;width:59px;height:8px;border:1px solid #2f3b4a;border-bottom:none;border-radius:3px 3px 0 0;background:linear-gradient(#e9eef4,#cfd9e4);box-shadow:inset 0 1px 0 #fff"></div>
<div class="a" style="left:555px;top:729px;width:59px;height:8px;border:1px solid #2f3b4a;border-bottom:none;border-radius:3px 3px 0 0;background:linear-gradient(#e9eef4,#cfd9e4);box-shadow:inset 0 1px 0 #fff"></div>
<div class="a" style="left:617px;top:729px;width:54px;height:8px;border:1px solid #2f3b4a;border-bottom:none;border-radius:3px 3px 0 0;background:linear-gradient(#e9eef4,#cfd9e4);box-shadow:inset 0 1px 0 #fff"></div>
<div class="a" style="left:680px;top:729px;width:54px;height:8px;border:1px solid #2f3b4a;border-bottom:none;border-radius:3px 3px 0 0;background:linear-gradient(#e9eef4,#cfd9e4);box-shadow:inset 0 1px 0 #fff"></div>
<div class="a" style="left:742px;top:729px;width:53px;height:8px;border:1px solid #2f3b4a;border-bottom:none;border-radius:3px 3px 0 0;background:linear-gradient(#e9eef4,#cfd9e4);box-shadow:inset 0 1px 0 #fff"></div>
<div class="a" style="left:804px;top:729px;width:58px;height:8px;border:1px solid #2f3b4a;border-bottom:none;border-radius:3px 3px 0 0;background:linear-gradient(#e9eef4,#cfd9e4);box-shadow:inset 0 1px 0 #fff"></div>
<div class="a" style="left:866px;top:729px;width:53px;height:8px;border:1px solid #2f3b4a;border-bottom:none;border-radius:3px 3px 0 0;background:linear-gradient(#e9eef4,#cfd9e4);box-shadow:inset 0 1px 0 #fff"></div>
<div class="a" style="left:116px;top:730px;width:2px;height:6px;background:linear-gradient(90deg,#56657a,#c5d2e0)"></div>
<div class="a" style="left:237px;top:730px;width:2px;height:6px;background:linear-gradient(90deg,#56657a,#c5d2e0)"></div>
<div class="a" style="left:615px;top:730px;width:2px;height:6px;background:linear-gradient(90deg,#56657a,#c5d2e0)"></div>
<div class="a" style="left:674px;top:730px;width:2px;height:6px;background:linear-gradient(90deg,#56657a,#c5d2e0)"></div>
<div class="a" style="left:737px;top:730px;width:2px;height:6px;background:linear-gradient(90deg,#56657a,#c5d2e0)"></div>
<div class="a" style="left:799px;top:730px;width:2px;height:6px;background:linear-gradient(90deg,#56657a,#c5d2e0)"></div>
<div class="a" style="left:863px;top:730px;width:2px;height:6px;background:linear-gradient(90deg,#56657a,#c5d2e0)"></div>
<div class="a" style="left:922px;top:730px;width:2px;height:6px;background:linear-gradient(90deg,#56657a,#c5d2e0)"></div>
<div class="a" style="left:78px;top:732px;width:16px;height:6px;border-radius:8px 8px 0 0;background:#f2b33a"></div>
<div class="a" style="left:140px;top:732px;width:18px;height:6px;border-radius:9px 9px 0 0;background:#3b7fc4"></div>
<div class="a" style="left:200px;top:733px;width:16px;height:5px;background:#e0b860"></div>
<div class="a" style="left:262px;top:731px;width:22px;height:7px;border-radius:11px 11px 0 0;border:2px solid #4a6d95;border-bottom:none"></div>
<div class="a" style="left:328px;top:731px;width:22px;height:6px;border-radius:11px 11px 0 0;background:#2a3850"></div>
<div class="a" style="left:453px;top:732px;width:16px;height:5px;border-radius:8px 8px 0 0;background:#e06040"></div>
<div class="a" style="left:508px;top:732px;width:28px;height:5px;border-radius:4px 4px 0 0;background:#f39a1e"></div>
<div class="a" style="left:572px;top:732px;width:20px;height:5px;border-radius:10px 10px 0 0;background:#2fa6e0"></div>
<div class="a" style="left:628px;top:732px;width:30px;height:5px;border-radius:2px 2px 0 0;background:#fafafa"></div>
<div class="a" style="left:886px;top:732px;width:28px;height:5px;border-top:2px solid #b0201c;background:#fff"></div>
<div class="a" style="left:1352px;top:729px;width:14px;height:7px;background:linear-gradient(#b9c8d8,#8c9fb5);border-left:1px solid #3c4b5e"></div>
<span class="t" id="t0" style="left:26.00px;top:5px;font-size:12px;line-height:12px;color:#000;letter-spacing:-0.014px;">Italsoft - Mozilla Firefox</span>
<span class="t" id="t1" style="left:6.00px;top:26px;font-size:12px;line-height:12px;color:#000;transform:scaleX(0.9305);transform-origin:0 0;">File</span>
<span class="t" id="t2" style="left:36.00px;top:26px;font-size:12px;line-height:12px;color:#000;letter-spacing:0.164px;">Modifica</span>
<span class="t" id="t3" style="left:95.00px;top:26px;font-size:12px;line-height:12px;color:#000;transform:scaleX(0.9106);transform-origin:0 0;">Visualizza</span>
<span class="t" id="t4" style="left:157.00px;top:26px;font-size:12px;line-height:12px;color:#000;letter-spacing:0.095px;">Cronologia</span>
<span class="t" id="t5" style="left:228.00px;top:26px;font-size:12px;line-height:12px;color:#000;letter-spacing:-0.138px;">Segnalibri</span>
<span class="t" id="t6" style="left:292.00px;top:26px;font-size:12px;line-height:12px;color:#000;letter-spacing:0.071px;">Strumenti</span>
<span class="t" id="t7" style="left:356.00px;top:26px;font-size:12px;line-height:12px;color:#000;letter-spacing:0.328px;">Aiuto</span>
<span class="t" id="t8" style="left:24.00px;top:51px;font-size:12px;line-height:12px;color:#000;letter-spacing:0.080px;">Italsoft</span>
<span class="t" id="t9" style="left:248.00px;top:51px;font-size:12px;line-height:12px;color:#000;letter-spacing:-0.070px;">guide:protocollo:arrivo_partenza...</span>
<span class="t" id="t10" style="left:470.00px;top:51px;font-size:12px;line-height:12px;color:#000;letter-spacing:-0.031px;">NuvolaPa.it - Portale Microsoft...</span>
<span class="t" id="t11" style="left:693.00px;top:51px;font-size:12px;line-height:12px;color:#000;letter-spacing:-0.031px;">NuvolaPa.it - Portale Microsoft...</span>
<span class="t" id="t12" style="left:916.00px;top:51px;font-size:12px;line-height:12px;color:#000;letter-spacing:-0.058px;">albaredo d'adige codice istat pel...</span>
<span class="t" id="t13" style="left:1139.00px;top:51px;font-size:12px;line-height:12px;color:#000;transform:scaleX(0.9093);transform-origin:0 0;">Generatore di password - Crea p...</span>
<span class="t" id="t14" style="left:59.00px;top:82px;font-size:12px;line-height:12px;color:#000;transform:scaleX(0.8990);transform-origin:0 0;">192.168.191.1</span>
<span class="t" id="t15" style="left:128.00px;top:82px;font-size:12px;line-height:12px;color:#6d6d6d;letter-spacing:0.080px;">/itaEngine/Start.php</span>
<span class="t" id="t16" style="left:1002.00px;top:82px;font-size:12px;line-height:12px;color:#000;transform:scaleX(0.9324);transform-origin:0 0;">ALBAREO D'ADIGE</span>
<span class="t" id="t17" style="left:24.00px;top:113px;font-size:12px;line-height:12px;color:#000;letter-spacing:-0.003px;">Più visitati</span>
<span class="t" id="t18" style="left:105.00px;top:113px;font-size:12px;line-height:12px;color:#000;letter-spacing:-0.105px;">Come iniziare</span>
<span class="t" id="t19" style="left:204.00px;top:113px;font-size:12px;line-height:12px;color:#000;letter-spacing:0.069px;">Ultime notizie</span>
<span class="t" id="t20" style="left:304.00px;top:113px;font-size:12px;line-height:12px;color:#000;letter-spacing:-0.052px;">http://192.168.191.1/</span>
<span class="t" id="t21" style="left:440.00px;top:113px;font-size:12px;line-height:12px;color:#000;transform:scaleX(0.8279);transform-origin:0 0;">URL_FORS</span>
<span class="t" id="t22" style="left:521.00px;top:113px;font-size:12px;line-height:12px;color:#000;transform:scaleX(0.9210);transform-origin:0 0;">Segreteria</span>
<span class="t" id="t23" style="left:600.00px;top:113px;font-size:12px;line-height:12px;color:#000;letter-spacing:-0.182px;">Google Calendar</span>
<span class="t" id="t24" style="left:21.00px;top:143px;font-size:16px;line-height:16px;color:#fff;font-weight:bold;letter-spacing:-0.001px;">SVILUPPO SOFTWARE</span>
<span class="t" id="t25" style="left:216.00px;top:145px;font-size:12px;line-height:12px;color:#2b5a8c;font-weight:bold;letter-spacing:0.914px;">Menù</span>
<span class="t" id="t26" style="left:1014.00px;top:143px;font-size:12px;line-height:12px;color:#f2f7fc;transform:scaleX(0.8967);transform-origin:0 0;">Cambia tema</span>
<span class="t" id="t27" style="left:1105.00px;top:145px;font-size:12px;line-height:12px;color:#fff;font-weight:bold;transform:scaleX(0.9164);transform-origin:0 0;">Zoom 75%</span>
<span class="t" id="t28" style="left:14.00px;top:174px;font-size:11.5px;line-height:11.5px;color:#2e5f96;font-weight:bold;letter-spacing:0.009px;">prot3 Home</span>
<span class="t" id="t29" style="left:105.00px;top:174px;font-size:11.5px;line-height:11.5px;color:#2e5f96;font-weight:bold;letter-spacing:0.013px;">Gestione Trasmissioni</span>
<span class="t" id="t30" style="left:421.00px;top:174px;font-size:11.5px;line-height:11.5px;color:#7c1c1c;font-weight:bold;letter-spacing:0.065px;">Gestione Arrivi</span>
<span class="t" id="t31" style="left:271.00px;top:174px;font-size:11.5px;line-height:11.5px;color:#fff;font-weight:bold;letter-spacing:-0.119px;">Gestione Protocollo</span>
<span class="t" id="t32" style="left:4.00px;top:196px;font-size:9.3px;line-height:9.3px;color:#fff;letter-spacing:-0.007px;">Gestione Protocollo</span>
<span class="t" id="t33" style="left:16.00px;top:225px;font-size:10.5px;line-height:10.5px;color:#fff;font-weight:bold;letter-spacing:-0.071px;">Ricerca Protocolli</span>
<span class="t" id="t34" style="left:21.00px;top:247px;font-size:10.5px;line-height:10.5px;color:#2f639b;font-weight:bold;letter-spacing:0.161px;">A/P</span>
<span class="t" id="t35" style="left:85.00px;top:247px;font-size:10.5px;line-height:10.5px;color:#2f639b;font-weight:bold;letter-spacing:-0.207px;">Anno</span>
<span class="t" id="t36" style="left:132.00px;top:247px;font-size:10.5px;line-height:10.5px;color:#2f639b;font-weight:bold;letter-spacing:-0.003px;">Codice</span>
<span class="t" id="t37" style="left:199.00px;top:247px;font-size:10.5px;line-height:10.5px;color:#2f639b;font-weight:bold;letter-spacing:-0.049px;">Data Reg.</span>
<span class="t" id="t38" style="left:298.50px;top:247px;font-size:10.5px;line-height:10.5px;color:#2f639b;font-weight:bold;letter-spacing:-0.031px;">Ora</span>
<span class="t" id="t39" style="left:363.00px;top:247px;font-size:10.5px;line-height:10.5px;color:#2f639b;font-weight:bold;letter-spacing:-0.034px;">N. Anteced.</span>
<span class="t" id="t40" style="left:455.00px;top:247px;font-size:10.5px;line-height:10.5px;color:#2f639b;font-weight:bold;letter-spacing:-0.053px;">Data Carte</span>
<span class="t" id="t41" style="left:541.50px;top:247px;font-size:10.5px;line-height:10.5px;color:#2f639b;font-weight:bold;letter-spacing:-0.031px;">Riferimento</span>
<span class="t" id="t42" style="left:658.50px;top:247px;font-size:10.5px;line-height:10.5px;color:#2f639b;font-weight:bold;letter-spacing:0.189px;">Provenienza/Destinatario</span>
<span class="t" id="t43" style="left:847.00px;top:247px;font-size:10.5px;line-height:10.5px;color:#2f639b;font-weight:bold;letter-spacing:0.026px;">N.All.</span>
<span class="t" id="t44" style="left:1004.00px;top:247px;font-size:10.5px;line-height:10.5px;color:#2f639b;font-weight:bold;letter-spacing:0.107px;">Oggetto</span>
<span class="t" id="t45" style="left:15.00px;top:269px;font-size:11px;line-height:11px;color:#262626;">A</span>
<span class="t" id="t46" style="left:78.30px;top:269px;font-size:11px;line-height:11px;color:#262626;letter-spacing:-0.196px;">2013</span>
<span class="t" id="t47" style="left:124.50px;top:269px;font-size:11px;line-height:11px;color:#262626;letter-spacing:-0.196px;">2682</span>
<span class="t" id="t48" style="left:182.00px;top:269px;font-size:11px;line-height:11px;color:#262626;letter-spacing:0.294px;">12/06/2013</span>
<span class="t" id="t49" style="left:271.00px;top:269px;font-size:11px;line-height:11px;color:#262626;letter-spacing:0.021px;">17:14:09</span>
<span class="t" id="t50" style="left:350.00px;top:269px;font-size:11px;line-height:11px;color:#262626;">0</span>
<span class="t" id="t51" style="left:439.50px;top:269px;font-size:11px;line-height:11px;color:#262626;">0</span>
<span class="t" id="t52" style="left:618.00px;top:269px;font-size:11px;line-height:11px;color:#262626;transform:scaleX(0.8918);transform-origin:0 0;">AI PARLAMENTARI MARCHIGIANI</span>
<span class="t" id="t53" style="left:892.50px;top:269px;font-size:11px;line-height:11px;color:#262626;transform:scaleX(0.8999);transform-origin:0 0;">OGGeeeeeeeeeeeeeeeeeeeeETTO DI PROVA LLLLLLLLLL</span>
<span class="t" id="t54" style="left:15.00px;top:289px;font-size:11px;line-height:11px;color:#262626;">P</span>
<span class="t" id="t55" style="left:78.30px;top:289px;font-size:11px;line-height:11px;color:#262626;letter-spacing:-0.196px;">2013</span>
<span class="t" id="t56" style="left:124.50px;top:289px;font-size:11px;line-height:11px;color:#262626;letter-spacing:-0.196px;">2678</span>
<span class="t" id="t57" style="left:182.00px;top:289px;font-size:11px;line-height:11px;color:#262626;letter-spacing:0.375px;">11/06/2013</span>
<span class="t" id="t58" style="left:271.00px;top:289px;font-size:11px;line-height:11px;color:#262626;letter-spacing:0.021px;">10:15:51</span>
<span class="t" id="t59" style="left:350.00px;top:289px;font-size:11px;line-height:11px;color:#262626;">0</span>
<span class="t" id="t60" style="left:439.50px;top:289px;font-size:11px;line-height:11px;color:#262626;">0</span>
<span class="t" id="t61" style="left:621.00px;top:287px;font-size:11px;line-height:11px;color:#111;transform:scaleX(0.8530);transform-origin:0 0;">RISERVATO</span>
<span class="t" id="t62" style="left:895.00px;top:287px;font-size:11px;line-height:11px;color:#111;transform:scaleX(0.8530);transform-origin:0 0;">RISERVATO</span>
<span class="t" id="t63" style="left:15.00px;top:310px;font-size:11px;line-height:11px;color:#262626;">P</span>
<span class="t" id="t64" style="left:78.30px;top:310px;font-size:11px;line-height:11px;color:#262626;letter-spacing:-0.196px;">2013</span>
<span class="t" id="t65" style="left:124.50px;top:310px;font-size:11px;line-height:11px;color:#262626;letter-spacing:-0.196px;">2677</span>
<span class="t" id="t66" style="left:182.00px;top:310px;font-size:11px;line-height:11px;color:#262626;letter-spacing:0.375px;">11/06/2013</span>
<span class="t" id="t67" style="left:271.00px;top:310px;font-size:11px;line-height:11px;color:#262626;letter-spacing:0.021px;">10:14:20</span>
<span class="t" id="t68" style="left:350.00px;top:310px;font-size:11px;line-height:11px;color:#262626;">0</span>
<span class="t" id="t69" style="left:439.50px;top:310px;font-size:11px;line-height:11px;color:#262626;">0</span>
<span class="t" id="t70" style="left:621.00px;top:308px;font-size:11px;line-height:11px;color:#111;transform:scaleX(0.8530);transform-origin:0 0;">RISERVATO</span>
<span class="t" id="t71" style="left:895.00px;top:308px;font-size:11px;line-height:11px;color:#111;transform:scaleX(0.8530);transform-origin:0 0;">RISERVATO</span>
<span class="t" id="t72" style="left:15.00px;top:330px;font-size:11px;line-height:11px;color:#262626;">P</span>
<span class="t" id="t73" style="left:78.30px;top:330px;font-size:11px;line-height:11px;color:#262626;letter-spacing:-0.196px;">2013</span>
<span class="t" id="t74" style="left:124.50px;top:330px;font-size:11px;line-height:11px;color:#262626;letter-spacing:-0.196px;">2676</span>
<span class="t" id="t75" style="left:182.00px;top:330px;font-size:11px;line-height:11px;color:#262626;letter-spacing:0.294px;">10/06/2013</span>
<span class="t" id="t76" style="left:271.00px;top:330px;font-size:11px;line-height:11px;color:#262626;letter-spacing:0.021px;">17:30:44</span>
<span class="t" id="t77" style="left:350.00px;top:330px;font-size:11px;line-height:11px;color:#262626;">0</span>
<span class="t" id="t78" style="left:439.50px;top:330px;font-size:11px;line-height:11px;color:#262626;">0</span>
<span class="t" id="t79" style="left:618.00px;top:330px;font-size:11px;line-height:11px;color:#262626;transform:scaleX(0.8918);transform-origin:0 0;">AI PARLAMENTARI MARCHIGIANI</span>
<span class="t" id="t80" style="left:892.50px;top:330px;font-size:11px;line-height:11px;color:#262626;transform:scaleX(0.8999);transform-origin:0 0;">OGGeeeeeeeeeeeeeeeeeeeeETTO DI PROVA LLLLLLLLLL</span>
<span class="t" id="t81" style="left:15.00px;top:351px;font-size:11px;line-height:11px;color:#262626;">P</span>
<span class="t" id="t82" style="left:78.30px;top:351px;font-size:11px;line-height:11px;color:#262626;letter-spacing:-0.196px;">2013</span>
<span class="t" id="t83" style="left:124.50px;top:351px;font-size:11px;line-height:11px;color:#262626;letter-spacing:-0.196px;">2669</span>
<span class="t" id="t84" style="left:182.00px;top:351px;font-size:11px;line-height:11px;color:#262626;letter-spacing:0.294px;">10/06/2013</span>
<span class="t" id="t85" style="left:271.00px;top:351px;font-size:11px;line-height:11px;color:#262626;letter-spacing:0.021px;">15:37:17</span>
<span class="t" id="t86" style="left:350.00px;top:351px;font-size:11px;line-height:11px;color:#262626;">0</span>
<span class="t" id="t87" style="left:439.50px;top:351px;font-size:11px;line-height:11px;color:#262626;">0</span>
<span class="t" id="t88" style="left:618.00px;top:351px;font-size:11px;line-height:11px;color:#262626;transform:scaleX(0.8918);transform-origin:0 0;">AI PARLAMENTARI MARCHIGIANI</span>
<span class="t" id="t89" style="left:892.50px;top:351px;font-size:11px;line-height:11px;color:#262626;transform:scaleX(0.8889);transform-origin:0 0;">OGGETTO DI PROVA LLLLLLLLLLLLLLLLLLLLLLLLLL</span>
<span class="t" id="t90" style="left:15.00px;top:371px;font-size:11px;line-height:11px;color:#262626;">P</span>
<span class="t" id="t91" style="left:78.30px;top:371px;font-size:11px;line-height:11px;color:#262626;letter-spacing:-0.196px;">2013</span>
<span class="t" id="t92" style="left:124.50px;top:371px;font-size:11px;line-height:11px;color:#262626;letter-spacing:-0.196px;">2667</span>
<span class="t" id="t93" style="left:182.00px;top:371px;font-size:11px;line-height:11px;color:#262626;letter-spacing:0.294px;">06/06/2013</span>
<span class="t" id="t94" style="left:271.00px;top:371px;font-size:11px;line-height:11px;color:#262626;letter-spacing:0.021px;">12:01:09</span>
<span class="t" id="t95" style="left:350.00px;top:371px;font-size:11px;line-height:11px;color:#262626;">0</span>
<span class="t" id="t96" style="left:439.50px;top:371px;font-size:11px;line-height:11px;color:#262626;">0</span>
<span class="t" id="t97" style="left:621.00px;top:369px;font-size:11px;line-height:11px;color:#111;transform:scaleX(0.8530);transform-origin:0 0;">RISERVATO</span>
<span class="t" id="t98" style="left:895.00px;top:369px;font-size:11px;line-height:11px;color:#111;transform:scaleX(0.8530);transform-origin:0 0;">RISERVATO</span>
<span class="t" id="t99" style="left:15.00px;top:392px;font-size:11px;line-height:11px;color:#262626;">A</span>
<span class="t" id="t100" style="left:78.30px;top:392px;font-size:11px;line-height:11px;color:#262626;letter-spacing:-0.196px;">2013</span>
<span class="t" id="t101" style="left:124.50px;top:392px;font-size:11px;line-height:11px;color:#262626;letter-spacing:-0.196px;">2666</span>
<span class="t" id="t102" style="left:182.00px;top:392px;font-size:11px;line-height:11px;color:#262626;letter-spacing:0.294px;">06/06/2013</span>
<span class="t" id="t103" style="left:271.00px;top:392px;font-size:11px;line-height:11px;color:#262626;letter-spacing:0.123px;">11:16:39</span>
<span class="t" id="t104" style="left:350.00px;top:392px;font-size:11px;line-height:11px;color:#262626;letter-spacing:-0.019px;">2013002665</span>
<span class="t" id="t105" style="left:439.50px;top:392px;font-size:11px;line-height:11px;color:#262626;">0</span>
<span class="t" id="t106" style="left:621.00px;top:390px;font-size:11px;line-height:11px;color:#111;transform:scaleX(0.8530);transform-origin:0 0;">RISERVATO</span>
<span class="t" id="t107" style="left:895.00px;top:390px;font-size:11px;line-height:11px;color:#111;transform:scaleX(0.8530);transform-origin:0 0;">RISERVATO</span>
<span class="t" id="t108" style="left:15.00px;top:413px;font-size:11px;line-height:11px;color:#262626;">A</span>
<span class="t" id="t109" style="left:78.30px;top:413px;font-size:11px;line-height:11px;color:#262626;letter-spacing:-0.196px;">2013</span>
<span class="t" id="t110" style="left:124.50px;top:413px;font-size:11px;line-height:11px;color:#262626;letter-spacing:-0.196px;">2665</span>
<span class="t" id="t111" style="left:182.00px;top:413px;font-size:11px;line-height:11px;color:#262626;letter-spacing:0.294px;">06/06/2013</span>
<span class="t" id="t112" style="left:271.00px;top:413px;font-size:11px;line-height:11px;color:#262626;letter-spacing:0.123px;">11:16:10</span>
<span class="t" id="t113" style="left:350.00px;top:413px;font-size:11px;line-height:11px;color:#262626;">0</span>
<span class="t" id="t114" style="left:439.50px;top:413px;font-size:11px;line-height:11px;color:#262626;">0</span>
<span class="t" id="t115" style="left:621.00px;top:411px;font-size:11px;line-height:11px;color:#111;transform:scaleX(0.8530);transform-origin:0 0;">RISERVATO</span>
<span class="t" id="t116" style="left:895.00px;top:411px;font-size:11px;line-height:11px;color:#111;transform:scaleX(0.8530);transform-origin:0 0;">RISERVATO</span>
<span class="t" id="t117" style="left:15.00px;top:433px;font-size:11px;line-height:11px;color:#262626;">A</span>
<span class="t" id="t118" style="left:78.30px;top:433px;font-size:11px;line-height:11px;color:#262626;letter-spacing:-0.196px;">2013</span>
<span class="t" id="t119" style="left:124.50px;top:433px;font-size:11px;line-height:11px;color:#262626;letter-spacing:-0.196px;">2664</span>
<span class="t" id="t120" style="left:182.00px;top:433px;font-size:11px;line-height:11px;color:#262626;letter-spacing:0.294px;">06/06/2013</span>
<span class="t" id="t121" style="left:271.00px;top:433px;font-size:11px;line-height:11px;color:#262626;letter-spacing:0.021px;">10:47:59</span>
<span class="t" id="t122" style="left:350.00px;top:433px;font-size:11px;line-height:11px;color:#262626;letter-spacing:-0.019px;">2013002658</span>
<span class="t" id="t123" style="left:439.50px;top:433px;font-size:11px;line-height:11px;color:#262626;">0</span>
<span class="t" id="t124" style="left:618.00px;top:433px;font-size:11px;line-height:11px;color:#262626;transform:scaleX(0.8729);transform-origin:0 0;">ROSSI ANNA RITA</span>
<span class="t" id="t125" style="left:892.50px;top:433px;font-size:11px;line-height:11px;color:#262626;letter-spacing:-0.193px;">Partenza per prot 1</span>
<span class="t" id="t126" style="left:15.00px;top:454px;font-size:11px;line-height:11px;color:#262626;">A</span>
<span class="t" id="t127" style="left:78.30px;top:454px;font-size:11px;line-height:11px;color:#262626;letter-spacing:-0.196px;">2013</span>
<span class="t" id="t128" style="left:124.50px;top:454px;font-size:11px;line-height:11px;color:#262626;letter-spacing:-0.196px;">2663</span>
<span class="t" id="t129" style="left:182.00px;top:454px;font-size:11px;line-height:11px;color:#262626;letter-spacing:0.294px;">06/06/2013</span>
<span class="t" id="t130" style="left:271.00px;top:454px;font-size:11px;line-height:11px;color:#262626;letter-spacing:0.021px;">09:43:12</span>
<span class="t" id="t131" style="left:350.00px;top:454px;font-size:11px;line-height:11px;color:#262626;">0</span>
<span class="t" id="t132" style="left:439.50px;top:454px;font-size:11px;line-height:11px;color:#262626;">0</span>
<span class="t" id="t133" style="left:618.00px;top:454px;font-size:11px;line-height:11px;color:#262626;transform:scaleX(0.8864);transform-origin:0 0;">aaaaaaaaaaaaa</span>
<span class="t" id="t134" style="left:892.50px;top:454px;font-size:11px;line-height:11px;color:#262626;transform:scaleX(0.8784);transform-origin:0 0;">aaaaaaaa</span>
<span class="t" id="t135" style="left:15.00px;top:474px;font-size:11px;line-height:11px;color:#262626;">A</span>
<span class="t" id="t136" style="left:78.30px;top:474px;font-size:11px;line-height:11px;color:#262626;letter-spacing:-0.196px;">2013</span>
<span class="t" id="t137" style="left:124.50px;top:474px;font-size:11px;line-height:11px;color:#262626;letter-spacing:-0.196px;">2662</span>
<span class="t" id="t138" style="left:182.00px;top:474px;font-size:11px;line-height:11px;color:#262626;letter-spacing:0.294px;">06/06/2013</span>
<span class="t" id="t139" style="left:271.00px;top:474px;font-size:11px;line-height:11px;color:#262626;letter-spacing:0.021px;">09:41:39</span>
<span class="t" id="t140" style="left:350.00px;top:474px;font-size:11px;line-height:11px;color:#262626;">0</span>
<span class="t" id="t141" style="left:439.50px;top:474px;font-size:11px;line-height:11px;color:#262626;">0</span>
<span class="t" id="t142" style="left:618.00px;top:474px;font-size:11px;line-height:11px;color:#262626;transform:scaleX(0.8321);transform-origin:0 0;">ACCA SOFTWARE</span>
<span class="t" id="t143" style="left:892.50px;top:474px;font-size:11px;line-height:11px;color:#262626;letter-spacing:-0.006px;">Arrivo di prova, inviato a prot 2</span>
<span class="t" id="t144" style="left:15.00px;top:495px;font-size:11px;line-height:11px;color:#262626;">P</span>
<span class="t" id="t145" style="left:78.30px;top:495px;font-size:11px;line-height:11px;color:#262626;letter-spacing:-0.196px;">2013</span>
<span class="t" id="t146" style="left:124.50px;top:495px;font-size:11px;line-height:11px;color:#262626;letter-spacing:-0.196px;">2658</span>
<span class="t" id="t147" style="left:182.00px;top:495px;font-size:11px;line-height:11px;color:#262626;letter-spacing:0.294px;">04/06/2013</span>
<span class="t" id="t148" style="left:271.00px;top:495px;font-size:11px;line-height:11px;color:#262626;letter-spacing:0.021px;">09:24:59</span>
<span class="t" id="t149" style="left:350.00px;top:495px;font-size:11px;line-height:11px;color:#262626;">0</span>
<span class="t" id="t150" style="left:439.50px;top:495px;font-size:11px;line-height:11px;color:#262626;">0</span>
<span class="t" id="t151" style="left:618.00px;top:495px;font-size:11px;line-height:11px;color:#262626;transform:scaleX(0.8729);transform-origin:0 0;">ROSSI ANNA RITA</span>
<span class="t" id="t152" style="left:892.50px;top:495px;font-size:11px;line-height:11px;color:#262626;letter-spacing:-0.193px;">Partenza per prot 1</span>
<span class="t" id="t153" style="left:15.00px;top:516px;font-size:11px;line-height:11px;color:#262626;">P</span>
<span class="t" id="t154" style="left:78.30px;top:516px;font-size:11px;line-height:11px;color:#262626;letter-spacing:-0.196px;">2013</span>
<span class="t" id="t155" style="left:124.50px;top:516px;font-size:11px;line-height:11px;color:#262626;letter-spacing:-0.196px;">2657</span>
<span class="t" id="t156" style="left:182.00px;top:516px;font-size:11px;line-height:11px;color:#262626;letter-spacing:0.294px;">03/06/2013</span>
<span class="t" id="t157" style="left:271.00px;top:516px;font-size:11px;line-height:11px;color:#262626;letter-spacing:0.021px;">18:08:46</span>
<span class="t" id="t158" style="left:350.00px;top:516px;font-size:11px;line-height:11px;color:#262626;">0</span>
<span class="t" id="t159" style="left:439.50px;top:516px;font-size:11px;line-height:11px;color:#262626;">0</span>
<span class="t" id="t160" style="left:618.00px;top:516px;font-size:11px;line-height:11px;color:#262626;transform:scaleX(0.8656);transform-origin:0 0;">A&amp;C NETWORK S.R.L.</span>
<span class="t" id="t161" style="left:892.50px;top:516px;font-size:11px;line-height:11px;color:#262626;transform:scaleX(0.8711);transform-origin:0 0;">PROVA DI INSERIMENTO OGGETTO</span>
<span class="t" id="t162" style="left:15.00px;top:536px;font-size:11px;line-height:11px;color:#262626;">A</span>
<span class="t" id="t163" style="left:78.30px;top:536px;font-size:11px;line-height:11px;color:#262626;letter-spacing:-0.196px;">2013</span>
<span class="t" id="t164" style="left:124.50px;top:536px;font-size:11px;line-height:11px;color:#262626;letter-spacing:-0.196px;">2656</span>
<span class="t" id="t165" style="left:182.00px;top:536px;font-size:11px;line-height:11px;color:#262626;letter-spacing:0.294px;">03/06/2013</span>
<span class="t" id="t166" style="left:271.00px;top:536px;font-size:11px;line-height:11px;color:#262626;letter-spacing:0.021px;">18:02:27</span>
<span class="t" id="t167" style="left:350.00px;top:536px;font-size:11px;line-height:11px;color:#262626;">0</span>
<span class="t" id="t168" style="left:439.50px;top:536px;font-size:11px;line-height:11px;color:#262626;letter-spacing:0.294px;">02/01/2013</span>
<span class="t" id="t169" style="left:529.00px;top:536px;font-size:11px;line-height:11px;color:#262626;letter-spacing:-0.219px;">12345</span>
<span class="t" id="t170" style="left:621.00px;top:534px;font-size:11px;line-height:11px;color:#111;transform:scaleX(0.8530);transform-origin:0 0;">RISERVATO</span>
<span class="t" id="t171" style="left:895.00px;top:534px;font-size:11px;line-height:11px;color:#111;transform:scaleX(0.8530);transform-origin:0 0;">RISERVATO</span>
<span class="t" id="t172" style="left:15.00px;top:557px;font-size:11px;line-height:11px;color:#262626;">A</span>
<span class="t" id="t173" style="left:78.30px;top:557px;font-size:11px;line-height:11px;color:#262626;letter-spacing:-0.196px;">2013</span>
<span class="t" id="t174" style="left:124.50px;top:557px;font-size:11px;line-height:11px;color:#262626;letter-spacing:-0.196px;">2655</span>
<span class="t" id="t175" style="left:182.00px;top:557px;font-size:11px;line-height:11px;color:#262626;letter-spacing:0.294px;">03/06/2013</span>
<span class="t" id="t176" style="left:271.00px;top:557px;font-size:11px;line-height:11px;color:#262626;letter-spacing:0.021px;">17:49:01</span>
<span class="t" id="t177" style="left:350.00px;top:557px;font-size:11px;line-height:11px;color:#262626;">0</span>
<span class="t" id="t178" style="left:439.50px;top:557px;font-size:11px;line-height:11px;color:#262626;">0</span>
<span class="t" id="t179" style="left:618.00px;top:557px;font-size:11px;line-height:11px;color:#262626;transform:scaleX(0.8930);transform-origin:0 0;">ACCADEMIA AERONAUTICA</span>
<span class="t" id="t180" style="left:892.50px;top:557px;font-size:11px;line-height:11px;color:#262626;letter-spacing:-0.047px;">prova di arrivo</span>
<span class="t" id="t181" style="left:15.00px;top:577px;font-size:11px;line-height:11px;color:#262626;">A</span>
<span class="t" id="t182" style="left:78.30px;top:577px;font-size:11px;line-height:11px;color:#262626;letter-spacing:-0.196px;">2013</span>
<span class="t" id="t183" style="left:124.50px;top:577px;font-size:11px;line-height:11px;color:#262626;letter-spacing:-0.196px;">2654</span>
<span class="t" id="t184" style="left:182.00px;top:577px;font-size:11px;line-height:11px;color:#262626;letter-spacing:0.294px;">03/06/2013</span>
<span class="t" id="t185" style="left:271.00px;top:577px;font-size:11px;line-height:11px;color:#262626;letter-spacing:0.021px;">16:15:09</span>
<span class="t" id="t186" style="left:350.00px;top:577px;font-size:11px;line-height:11px;color:#262626;">0</span>
<span class="t" id="t187" style="left:439.50px;top:577px;font-size:11px;line-height:11px;color:#262626;">0</span>
<span class="t" id="t188" style="left:618.00px;top:577px;font-size:11px;line-height:11px;color:#262626;transform:scaleX(0.8918);transform-origin:0 0;">AI PARLAMENTARI MARCHIGIANI</span>
<span class="t" id="t189" style="left:892.50px;top:577px;font-size:11px;line-height:11px;color:#262626;transform:scaleX(0.9150);transform-origin:0 0;">OGGETTO DI PROVA 4 kk</span>
<span class="t" id="t190" style="left:15.00px;top:598px;font-size:11px;line-height:11px;color:#262626;">P</span>
<span class="t" id="t191" style="left:78.30px;top:598px;font-size:11px;line-height:11px;color:#262626;letter-spacing:-0.196px;">2013</span>
<span class="t" id="t192" style="left:124.50px;top:598px;font-size:11px;line-height:11px;color:#262626;letter-spacing:-0.196px;">2652</span>
<span class="t" id="t193" style="left:182.00px;top:598px;font-size:11px;line-height:11px;color:#262626;letter-spacing:0.294px;">03/06/2013</span>
<span class="t" id="t194" style="left:271.00px;top:598px;font-size:11px;line-height:11px;color:#262626;letter-spacing:0.021px;">15:47:23</span>
<span class="t" id="t195" style="left:350.00px;top:598px;font-size:11px;line-height:11px;color:#262626;">0</span>
<span class="t" id="t196" style="left:439.50px;top:598px;font-size:11px;line-height:11px;color:#262626;">0</span>
<span class="t" id="t197" style="left:618.00px;top:598px;font-size:11px;line-height:11px;color:#262626;transform:scaleX(0.8656);transform-origin:0 0;">A&amp;C NETWORK S.R.L.</span>
<span class="t" id="t198" style="left:892.50px;top:598px;font-size:11px;line-height:11px;color:#262626;transform:scaleX(0.8892);transform-origin:0 0;">FATTURA N.aaaaa</span>
<span class="t" id="t199" style="left:550.00px;top:628px;font-size:11px;line-height:11px;color:#34649a;transform:scaleX(0.8901);transform-origin:0 0;">Pagina</span>
<span class="t" id="t200" style="left:589.50px;top:629px;font-size:10px;line-height:10px;color:#111;">1</span>
<span class="t" id="t201" style="left:605.50px;top:628px;font-size:11px;line-height:11px;color:#34649a;letter-spacing:-0.062px;">di 4</span>
<span class="t" id="t202" style="left:1043.00px;top:628px;font-size:11px;line-height:11px;color:#34649a;letter-spacing:0.003px;">Visualizzati 1 - 17 di 52</span>
<span class="t" id="t203" style="left:1233.50px;top:238px;font-size:11.5px;line-height:11.5px;color:#33679c;font-weight:bold;letter-spacing:-0.065px;">F3 - Altra Ricerca</span>
<span class="t" id="t204" style="left:1233.50px;top:275px;font-size:11.5px;line-height:11.5px;color:#33679c;font-weight:bold;letter-spacing:-0.258px;">Stampa</span>
<span class="t" id="t205" style="left:4.00px;top:686px;font-size:12px;line-height:12px;color:#222;letter-spacing:-0.171px;">192.168.191.1/itaEngine/Start.php#</span>
<span class="t" id="t206" style="left:33.00px;top:709px;font-size:12px;line-height:12px;color:#000;letter-spacing:-0.260px;">Trova:</span>
<span class="t" id="t207" style="left:80.00px;top:709px;font-size:12px;line-height:12px;color:#000;letter-spacing:-0.098px;">mariaro</span>
<span class="t" id="t208" style="left:222.00px;top:710px;font-size:12px;line-height:12px;color:#000;transform:scaleX(0.9390);transform-origin:0 0;">Successivo</span>
<span class="t" id="t209" style="left:306.00px;top:710px;font-size:12px;line-height:12px;color:#000;letter-spacing:-0.239px;">Precedente</span>
<span class="t" id="t210" style="left:392.00px;top:710px;font-size:12px;line-height:12px;color:#000;transform:scaleX(0.9417);transform-origin:0 0;">Evidenzia</span>
<span class="t" id="t211" style="left:472.00px;top:710px;font-size:12px;line-height:12px;color:#000;letter-spacing:0.085px;">Maiuscole/minuscole</span>
</body></html>
